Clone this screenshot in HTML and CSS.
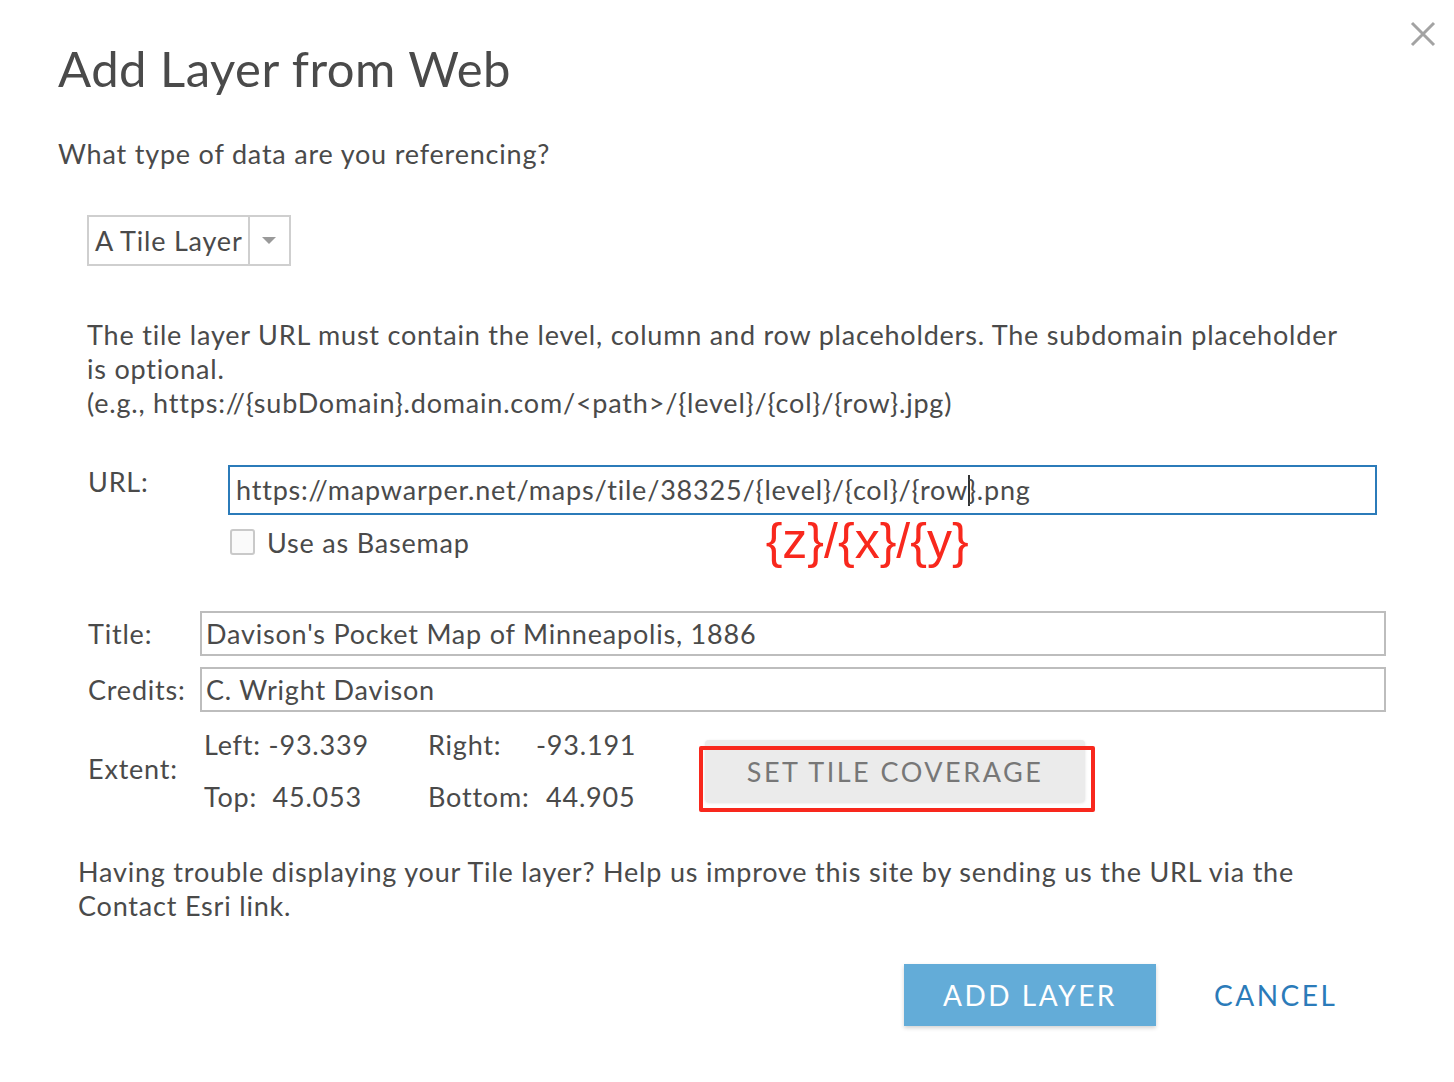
FILE: index.html
```html
<!DOCTYPE html>
<html lang="en">
<head>
<meta charset="utf-8">
<title>Add Layer from Web</title>
<link rel="stylesheet" href="styles.css">
</head>
<body>
<div class="dialog">
  <header class="dlg-header">
    <h1 class="dlg-title">Add Layer from Web</h1>
    <button class="close-btn" aria-label="Close">
      <svg width="26" height="26" viewBox="0 0 26 26"><path d="M2 2 L24 24 M24 2 L2 24" stroke="#a3a3a3" stroke-width="3" fill="none"/></svg>
    </button>
  </header>

  <p class="question">What type of data are you referencing?</p>

  <div class="select">
    <span class="select-value">A Tile Layer</span>
    <span class="select-arrow"><svg width="14" height="8" viewBox="0 0 14 8"><path d="M0 0 L14 0 L7 7 Z" fill="#9a9a9a"/></svg></span>
  </div>

  <p class="info">The tile layer URL must contain the level, column and row placeholders. The subdomain placeholder is optional.<br>(e.g., https://{subDomain}.domain.com/&lt;path&gt;/{level}/{col}/{row}.jpg)</p>

  <div class="url-grid">
    <label class="lbl url-lbl">URL:</label>
    <div class="input input-focus">https://mapwarper.net/maps/tile/38325/{level}/{col}/{row<span class="caret"></span>}.png</div>
    <div class="check-row">
      <span class="checkbox"></span>
      <span class="check-lbl">Use as Basemap</span>
      <span class="annot">{z}/{x}/{y}</span>
    </div>
  </div>

  <div class="meta-grid">
    <label class="lbl">Title:</label>
    <div class="input input-plain">Davison's Pocket Map of Minneapolis, 1886</div>
    <label class="lbl">Credits:</label>
    <div class="input input-plain">C. Wright Davison</div>
    <label class="lbl extent-lbl">Extent:</label>
    <div class="extent">
      <div class="ext-grid">
        <span>Left: -93.339</span>
        <span class="ext-k">Right:</span><span class="ext-v1">-93.191</span>
        <span>Top:&nbsp; 45.053</span>
        <span class="ext-k">Bottom:</span><span class="ext-v2">44.905</span>
      </div>
      <div class="cover-wrap">
        <button class="cover-btn">SET TILE COVERAGE</button>
      </div>
    </div>
  </div>

  <p class="help">Having trouble displaying your Tile layer? Help us improve this site by sending us the URL via the Contact Esri link.</p>

  <div class="actions">
    <button class="btn-primary">ADD LAYER</button>
    <button class="btn-link">CANCEL</button>
  </div>
</div>
</body>
</html>
```

FILE: styles.css
```css
html, body {
  margin: 0;
  padding: 0;
  background: #ffffff;
}

body {
  font-family: "Lato", "Open Sans", "Liberation Sans", sans-serif;
  color: #4a4a4a;
  letter-spacing: 0.8px;
}

.dialog {
  width: 1454px;
  height: 1082px;
  box-sizing: border-box;
}

.dlg-header {
  display: flex;
  justify-content: space-between;
  align-items: flex-start;
}

.dlg-title {
  margin: 38px 0 0 58px;
  font-size: 49px;
  font-weight: 400;
  line-height: 60px;
  letter-spacing: 0.5px;
}

.close-btn {
  margin: 21px 18px 0 0;
  padding: 0;
  border: 0;
  background: none;
  width: 26px;
  height: 26px;
}

.question {
  margin: 39px 0 0 58px;
  font-size: 27px;
  line-height: 34px;
}

.select {
  margin: 44px 0 0 87px;
  display: inline-flex;
  height: 51px;
  box-sizing: border-box;
  border: 2px solid #cfcfcf;
}

.select-value {
  padding: 0 5px 0 6px;
  font-size: 27px;
  line-height: 47px;
  border-right: 2px solid #cfcfcf;
}

.select-arrow {
  width: 39px;
  display: flex;
  align-items: center;
  justify-content: center;
}

.info {
  margin: 52px 0 0 87px;
  width: 1265px;
  font-size: 27px;
  line-height: 34px;
}

.url-grid {
  margin: 45px 77px 0 88px;
  display: grid;
  grid-template-columns: 140px 1fr;
}

.lbl {
  font-size: 27px;
  line-height: 34px;
}

.input {
  box-sizing: border-box;
  font-size: 27px;
  white-space: nowrap;
}

.input-focus {
  height: 50px;
  border: 2px solid #2b7bb9;
  padding: 0 6px;
  line-height: 46px;
}

.caret {
  display: inline-block;
  width: 2px;
  height: 31px;
  background: #333;
  vertical-align: -6px;
  margin-right: -2px;
}

.check-row {
  grid-column: 2;
  display: flex;
  align-items: center;
  margin-top: 4px;
  height: 46px;
}

.checkbox {
  width: 21px;
  height: 22px;
  border: 2px solid #c9c9c9;
  border-radius: 3px;
  background: #fafafa;
  margin: 0 12px 0 2px;
}

.check-lbl {
  font-size: 27px;
}

.annot {
  margin: 0 0 2px 296px;
  font-family: "Liberation Sans", Arial, sans-serif;
  font-size: 50px;
  letter-spacing: 0;
  color: #f8281d;
}

.meta-grid {
  margin: 46px 68px 0 88px;
  display: grid;
  grid-template-columns: 112px 1fr;
  row-gap: 11px;
  align-items: center;
}

.input-plain {
  height: 45px;
  border: 2px solid #bdbdbd;
  padding: 0 4px;
  line-height: 41px;
}

.extent {
  display: flex;
  align-items: center;
  margin-top: 5px;
}

.ext-grid {
  display: grid;
  grid-template-columns: 224px 108px 90px;
  row-gap: 18px;
  font-size: 27px;
  line-height: 34px;
  margin-left: 4px;
}

.ext-v2 {
  padding-left: 10px;
}

.cover-wrap {
  position: relative;
  margin-left: 79px;
}

.cover-wrap::after {
  content: "";
  position: absolute;
  left: -6px;
  top: 6px;
  width: 396px;
  height: 66px;
  box-sizing: border-box;
  border: 4px solid #f8281d;
  border-radius: 2px;
}

.cover-btn {
  display: block;
  width: 380px;
  height: 62px;
  border: 0;
  border-radius: 4px;
  background: #ebebeb;
  box-shadow: 0 1px 3px rgba(0,0,0,0.12);
  color: #777777;
  font-family: inherit;
  font-size: 27px;
  letter-spacing: 2.5px;
  padding: 0;
}

.help {
  margin: 41px 0 0 78px;
  width: 1260px;
  font-size: 27px;
  line-height: 34px;
}

.actions {
  display: flex;
  align-items: center;
  margin: 41px 0 0 904px;
}

.btn-primary {
  width: 252px;
  height: 62px;
  border: 0;
  background: #63acd8;
  color: #ffffff;
  font-family: inherit;
  font-size: 28px;
  letter-spacing: 2.5px;
  box-shadow: 0 2px 4px rgba(0,0,0,0.18);
  padding: 0;
}

.btn-link {
  margin-left: 58px;
  border: 0;
  background: none;
  color: #2b7bb9;
  font-family: inherit;
  font-size: 28px;
  letter-spacing: 2.5px;
  padding: 0;
}
```
